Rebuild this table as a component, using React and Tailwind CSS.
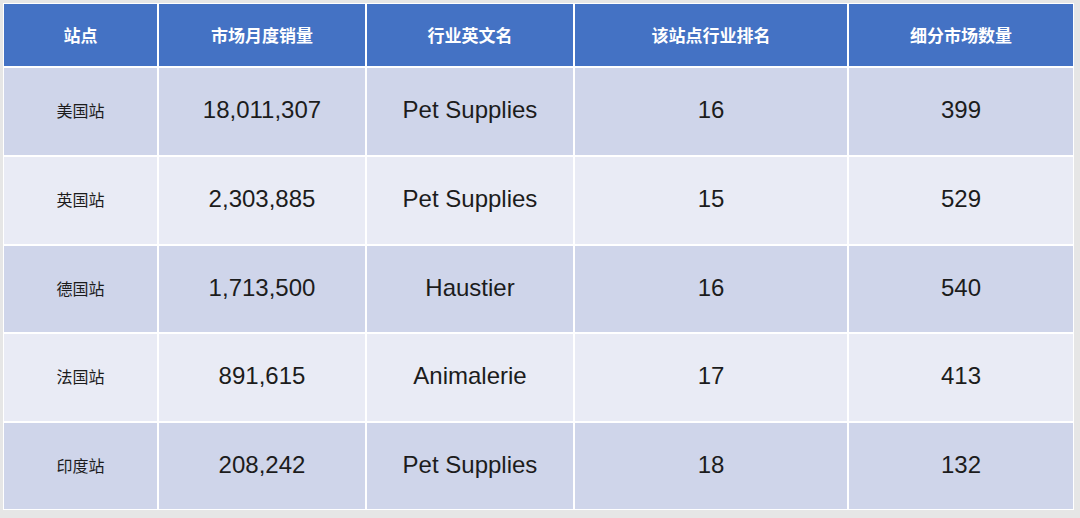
import React from "react";

const headers = ["站点", "市场月度销量", "行业英文名", "该站点行业排名", "细分市场数量"];
const rows = [
  ["美国站", "18,011,307", "Pet Supplies", "16", "399"],
  ["英国站", "2,303,885", "Pet Supplies", "15", "529"],
  ["德国站", "1,713,500", "Haustier", "16", "540"],
  ["法国站", "891,615", "Animalerie", "17", "413"],
  ["印度站", "208,242", "Pet Supplies", "18", "132"],
];

export default function App() {
  return (
    <div className="w-[1080px] h-[518px] bg-[#e6e6e6] pl-[3px] pt-[3px] overflow-hidden">
      <div className="inline-grid bg-white p-[1px] gap-[2px] grid-cols-[153px_206px_206px_272px_224px] grid-rows-[62px_87px_87px_86px_87px_86px]">
        {headers.map((h) => (
          <div
            key={h}
            className="bg-[#4472c4] flex items-center justify-center text-white font-bold text-[17px] font-['Noto_Sans_CJK_SC',sans-serif]"
          >
            {h}
          </div>
        ))}
        {rows.map((r, i) =>
          r.map((c, j) => (
            <div
              key={i + "-" + j}
              className={
                (i % 2 === 0 ? "bg-[#cfd5ea] " : "bg-[#e9ebf5] ") +
                "flex items-center justify-center pb-[3px] text-[#1c1c1c] " +
                (j === 0
                  ? "text-[16px] font-['Noto_Sans_CJK_SC',sans-serif]"
                  : "text-[24px] font-['Liberation_Sans',Arial,sans-serif]")
              }
            >
              {c}
            </div>
          ))
        )}
      </div>
    </div>
  );
}
